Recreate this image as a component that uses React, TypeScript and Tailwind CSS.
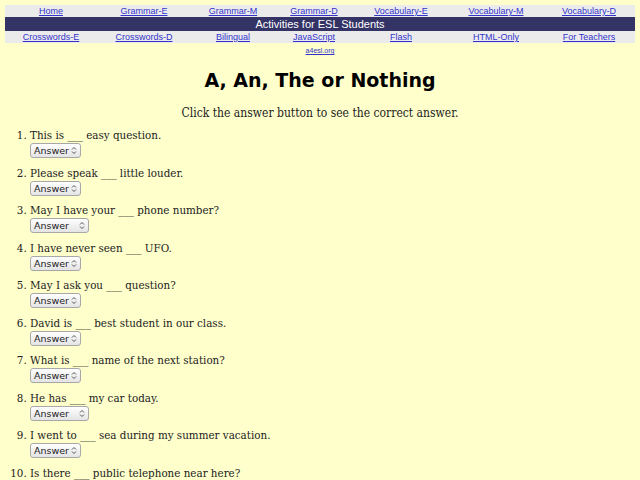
import React from 'react';

const topLinks = ['Home', 'Grammar-E', 'Grammar-M', 'Grammar-D', 'Vocabulary-E', 'Vocabulary-M', 'Vocabulary-D'];
const bottomLinks = ['Crosswords-E', 'Crosswords-D', 'Bilingual', 'JavaScript', 'Flash', 'HTML-Only', 'For Teachers'];

const questions: { text: [string, string]; wide?: boolean }[] = [
  { text: ['This is', 'easy question.'] },
  { text: ['Please speak', 'little louder.'] },
  { text: ['May I have your', 'phone number?'], wide: true },
  { text: ['I have never seen', 'UFO.'] },
  { text: ['May I ask you', 'question?'] },
  { text: ['David is', 'best student in our class.'] },
  { text: ['What is', 'name of the next station?'] },
  { text: ['He has', 'my car today.'], wide: true },
  { text: ['I went to', 'sea during my summer vacation.'] },
  { text: ['Is there', 'public telephone near here?'] },
];

function NavRow({ links }: { links: string[] }) {
  return (
    <div className="grid grid-cols-[92px_94px_84px_78px_96px_94px_92px] bg-[#ebebeb] h-[12px] items-center">
      {links.map((l) => (
        <a key={l} href="#" className="text-center text-[9px] leading-[12px] text-[#3333cc] underline">
          {l}
        </a>
      ))}
    </div>
  );
}

function AnswerSelect({ wide }: { wide?: boolean }) {
  return (
    <div
      className={`mt-[1px] flex h-[15px] items-center justify-between rounded-[3px] border border-[#a8a8a8] bg-gradient-to-b from-white to-[#e4e4e4] pl-[3px] pr-[3px] text-[9.5px] leading-[13px] text-[#222] ${
        wide ? 'w-[59px]' : 'w-[51px]'
      }`}
      style={{ fontFamily: '"DejaVu Sans", sans-serif' }}
    >
      <span className="whitespace-nowrap">Answer</span>
      <svg width="6" height="9" viewBox="0 0 6 9" className="shrink-0">
        <path d="M1 3.5 L3 1.5 L5 3.5 M1 5.5 L3 7.5 L5 5.5" fill="none" stroke="#444" strokeWidth="0.9" />
      </svg>
    </div>
  );
}

export default function App() {
  return (
    <div
      className="min-h-[480px] bg-[#ffffcc] px-[5px] pt-[5px]"
      style={{ fontFamily: '"DejaVu Serif Condensed", "DejaVu Serif", serif' }}
    >
      <nav style={{ fontFamily: '"Liberation Sans", Arial, sans-serif' }}>
        <NavRow links={topLinks} />
        <div className="flex h-[14px] items-center justify-center bg-[#333366] text-[11px] text-white">
          Activities for ESL Students
        </div>
        <NavRow links={bottomLinks} />
        <div className="text-center leading-[9px]">
          <a href="#" className="text-[7px] leading-[9px] text-[#3333cc] underline">
            a4esl.org
          </a>
        </div>
      </nav>

      <h1
        className="mt-[12px] text-center text-[19px] font-bold leading-[26px] text-black"
        style={{ fontFamily: '"Comic Sans MS", "DejaVu Sans", sans-serif' }}
      >
        A, An, The or Nothing
      </h1>

      <p className="mt-[13px] text-center text-[12px] leading-[15px] text-[#222]">
        Click the answer button to see the correct answer.
      </p>

      <ol className="mt-[7px] list-decimal pl-[25px] text-[11.5px] leading-[14px] text-[#222]">
        {questions.map((q, i) => (
          <li key={i} className="mb-[7.5px]">
            <span>
              {q.text[0]} ___ {q.text[1]}
            </span>
            <AnswerSelect wide={q.wide} />
          </li>
        ))}
      </ol>
    </div>
  );
}
